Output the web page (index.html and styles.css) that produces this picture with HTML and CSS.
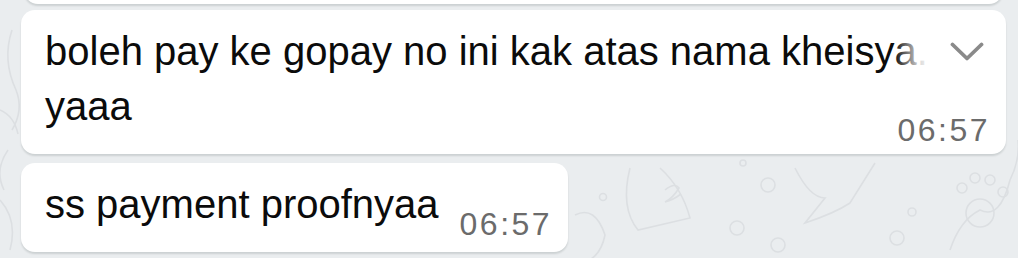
FILE: index.html
```html
<!DOCTYPE html>
<html lang="id">
<head>
<meta charset="utf-8">
<title>Chat</title>
<link rel="stylesheet" href="styles.css">
</head>
<body>
<div class="chat">
  <div class="bubble bubble-prev"></div>
  <div class="bubble bubble-multi">
    <p class="text">boleh pay ke gopay no ini kak atas nama kheisya. yaaa</p>
    <span class="time time-below">06:57</span>
    <div class="menu-fade">
      <svg class="chevron" width="34" height="20" viewBox="0 0 34 20"><polyline points="2.5,2.5 17,16.5 31.5,2.5" fill="none" stroke="#8a8a8a" stroke-width="3.8" stroke-linecap="round" stroke-linejoin="round"/></svg>
    </div>
  </div>
  <div class="bubble bubble-single">
    <p class="text">ss payment proofnyaa</p>
    <span class="time time-inline">06:57</span>
  </div>
</div>
</body>
</html>
```

FILE: styles.css
```css
html, body {
  margin: 0;
  padding: 0;
}

body {
  width: 1018px;
  height: 258px;
  overflow: hidden;
  font-family: "Liberation Sans", Arial, sans-serif;
  background-color: #eaedef;
  background-image: url("data:image/svg+xml;utf8,<svg xmlns='http://www.w3.org/2000/svg' width='1018' height='258'><g fill='none' stroke='%23dcdfe2' stroke-width='1.6'><circle cx='603' cy='197' r='3.5'/><circle cx='768' cy='185' r='7'/><circle cx='737' cy='228' r='7'/><circle cx='778' cy='245' r='7'/><circle cx='912' cy='212' r='4'/><circle cx='897' cy='238' r='7'/><circle cx='743' cy='163' r='3'/><circle cx='980' cy='213' r='14'/><circle cx='962' cy='188' r='5'/><circle cx='975' cy='178' r='5'/><circle cx='990' cy='180' r='5'/><circle cx='1003' cy='192' r='5'/><path d='M630 168 q-10 40 8 62 l52 -12 q-8 -30 -30 -50'/><path d='M665 190 q10 -8 14 -2 q-6 10 -14 14 q8 -2 16 -8'/><path d='M795 168 q15 30 30 30 l-20 25 q30 -10 45 -20 l25 -40'/><path d='M950 250 q10 -30 30 -40 q20 10 30 -30 q10 -20 8 -40'/><path d='M575 215 q20 -10 30 20 q-5 25 -25 28'/><path d='M8 150 q-14 20 -4 40'/><path d='M0 200 q18 20 10 50'/><path d='M12 30 q-10 30 4 60 q8 20 -4 40'/><path d='M0 110 q14 6 18 24'/></g></svg>");
  background-repeat: no-repeat;
}

.chat {
  display: flex;
  flex-direction: column;
  align-items: flex-start;
  padding: 0 12px 0 21px;
}

.bubble {
  background: #ffffff;
  border-radius: 14px;
  box-shadow: 0 2px 2px rgba(11, 20, 26, 0.13);
  padding: 14px 16px 20px 24px;
  box-sizing: border-box;
}

.bubble-prev {
  align-self: stretch;
  height: 40px;
  margin: -36px 3px 0 3px;
  padding: 0;
}

.bubble-multi {
  align-self: stretch;
  margin-top: 6px;
  position: relative;
  display: flex;
  flex-direction: column;
}

.bubble-single {
  margin-top: 9px;
  display: flex;
  align-items: flex-end;
  gap: 21px;
}

.text {
  margin: 0;
  font-size: 40px;
  line-height: 55px;
  color: #0b0b0b;
}

.time {
  font-size: 32px;
  line-height: 32px;
  letter-spacing: 2.5px;
  color: #6b6b6b;
  white-space: nowrap;
}

.time-below {
  align-self: flex-end;
  margin: -20px 0 -12px 0;
}

.time-inline {
  margin-bottom: -8px;
}

.menu-fade {
  position: absolute;
  top: 14px;
  right: 0;
  width: 112px;
  height: 55px;
  box-sizing: border-box;
  padding-right: 22px;
  display: flex;
  align-items: center;
  justify-content: flex-end;
  background: linear-gradient(to right, rgba(255, 255, 255, 0) 0, rgba(255, 255, 255, 0.85) 26px, #ffffff 38px);
}

.chevron {
  display: block;
}
```
